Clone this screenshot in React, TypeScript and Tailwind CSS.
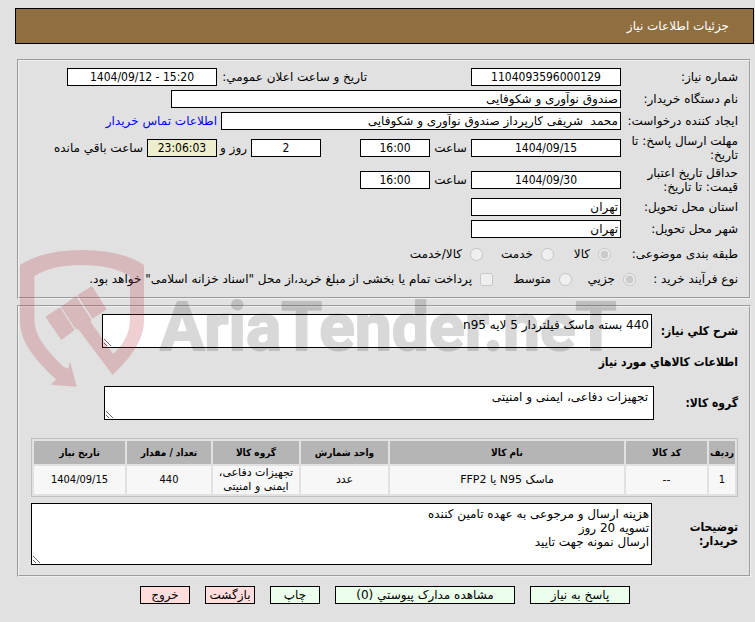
import type { ReactNode } from 'react';

const inputBase = 'h-[18px] border border-black bg-white px-[2px] text-xs leading-4 rounded-none focus:outline-none';
const numeric = "text-center font-['DejaVu_Sans_Condensed','DejaVu_Sans',sans-serif]";
const areaBase = 'block border border-black bg-white pt-[3px] text-xs leading-[14px] rounded-none resize focus:outline-none';
const heading = "font-bold font-['DejaVu_Sans_Condensed','DejaVu_Sans',sans-serif]";
const fieldsetBase = 'mr-1 ml-[17px] border-2 [border-style:groove] border-[#f0f0f0] pr-[11px]';

const columns = [
  { title: 'ردیف', width: 'w-[26px]', value: '1', isNumber: true },
  { title: 'کد کالا', width: 'w-[81px]', value: '--' },
  { title: 'نام کالا', width: '', value: 'ماسک N95 یا FFP2' },
  { title: 'واحد شمارش', width: 'w-[87px]', value: 'عدد' },
  { title: 'گروه کالا', width: 'w-[86px]', value: 'تجهیزات دفاعی، ایمنی و امنیتی' },
  { title: 'تعداد / مقدار', width: 'w-[84px]', value: '440', isNumber: true },
  { title: 'تاریخ نیاز', width: 'w-[91px]', value: '1404/09/15', isNumber: true },
];

const actions = [
  { label: 'پاسخ به نیاز', style: 'w-[100px] bg-[#ecffec]' },
  { label: 'مشاهده مدارک پیوستي (0)', style: 'w-[180px] bg-[#ecffec]' },
  { label: 'چاپ', style: 'w-[50px] bg-[#ecffec]' },
  { label: 'بازگشت', style: 'w-[50px] bg-[#ffdddd]' },
  { label: 'خروج', style: 'w-[50px] bg-[#ffdddd]' },
];

function Row({ id, label, className = 'h-[18px]', labelWidth = 'w-[117px]', children }: {
  id?: string; label: string; className?: string; labelWidth?: string; children: ReactNode;
}) {
  return (
    <div className={`flex items-center ${className}`}>
      <label htmlFor={id} className={`${labelWidth} shrink-0 leading-[14px]`}>{label}</label>
      {children}
    </div>
  );
}

function Option({ type = 'radio', name, label, checked = false, className = '' }: {
  type?: string; name: string; label: string; checked?: boolean; className?: string;
}) {
  return (
    <label className={`flex shrink-0 items-center gap-2 whitespace-nowrap ${className}`}>
      <input type={type} name={name} defaultChecked={checked} disabled className="size-[13px] shrink-0" />
      {label}
    </label>
  );
}

function Watermark() {
  return (
    <svg className="pointer-events-none absolute top-[246px] left-5" width="610" height="144" viewBox="20 246 610 144" direction="ltr" aria-hidden="true">
      <g transform="translate(0 240) scale(0.3333)" fill="#b6333c" fillOpacity="0.23">
        <path
          fillRule="evenodd"
          d="M60 75Q130 30 245 30Q365 30 432 75V240C432 300 395 350 338 405L235 268L226 266L183 200L228 168L275 240L272 246L340 342C370 312 390 285 390 235V108Q335 75 245 75Q155 75 103 108V235C103 290 140 330 190 380L205 386L210 364L230 440L152 434L168 418C95 350 60 300 60 240Z"
        />
        <path d="M136 230L180 202L224 270L184 300Z" />
        <path d="M232 166L276 138L320 208L278 236Z" />
      </g>
      <g opacity="0.15">
        <text x="160" y="350" fontSize="66" fontWeight="700" fontFamily="Roboto, Liberation Sans, sans-serif" stroke="black" strokeWidth="2" strokeLinejoin="round">
          AriaTender.neT
        </text>
      </g>
    </svg>
  );
}

export default function App() {
  return (
    <div dir="rtl" className="relative min-h-screen bg-[#e1e1e1] pt-2 pb-4 text-xs text-black font-['DejaVu_Sans',sans-serif]">
      <header className="mr-px ml-[15px] flex h-9 items-center border border-black bg-[#8f6e40] px-6">
        <h1 className="text-white">جزئیات اطلاعات نیاز</h1>
      </header>

      <fieldset className={`${fieldsetBase} mt-[15px] flex flex-col gap-1 pt-[7px] pb-[9px]`}>
        <Row id="number" label="شماره نیاز:">
          <input id="number" readOnly value="1104093596000129" className={`${inputBase} ${numeric} w-[150px]`} />
          <label htmlFor="announced" className="w-[254px] shrink-0 pr-[104px] whitespace-nowrap">تاریخ و ساعت اعلان عمومي:</label>
          <input id="announced" dir="ltr" readOnly value="1404/09/12 - 15:20" className={`${inputBase} ${numeric} w-[150px]`} />
        </Row>
        <Row id="buyer" label="نام دستگاه خریدار:">
          <input id="buyer" readOnly value="صندوق نوآوری و شکوفایی" className={`${inputBase} w-[450px]`} />
        </Row>
        <Row id="creator" label="ایجاد کننده درخواست:">
          <input id="creator" readOnly value="محمد  شریفی کارپرداز صندوق نوآوری و شکوفایی" className={`${inputBase} w-[400px]`} />
          <a href="#contact" className="mr-1 whitespace-nowrap text-[#0000ff]">اطلاعات تماس خریدار</a>
        </Row>
        <Row id="deadline" label="مهلت ارسال پاسخ: تا تاریخ:" className="h-7">
          <input id="deadline" readOnly value="1404/09/15" className={`${inputBase} ${numeric} w-[150px]`} />
          <label htmlFor="deadline-time" className="w-[41px] shrink-0 text-center">ساعت</label>
          <input id="deadline-time" readOnly value="16:00" className={`${inputBase} ${numeric} w-[70px]`} />
          <input id="days" readOnly value="2" className={`${inputBase} ${numeric} mr-[39px] w-[70px]`} />
          <label htmlFor="days" className="w-[34px] shrink-0 pr-1 whitespace-nowrap">روز و</label>
          <input id="remaining" readOnly value="23:06:03" className={`${inputBase} ${numeric} w-[70px] bg-[#eeeecc]!`} />
          <label htmlFor="remaining" className="mr-1 whitespace-nowrap">ساعت باقي مانده</label>
        </Row>
        <Row id="validity" label="حداقل تاریخ اعتبار قیمت: تا تاریخ:" className="h-7">
          <input id="validity" readOnly value="1404/09/30" className={`${inputBase} ${numeric} w-[150px]`} />
          <label htmlFor="validity-time" className="w-[41px] shrink-0 text-center">ساعت</label>
          <input id="validity-time" readOnly value="16:00" className={`${inputBase} ${numeric} w-[70px]`} />
        </Row>
        <Row id="province" label="استان محل تحویل:">
          <input id="province" readOnly value="تهران" className={`${inputBase} w-[150px]`} />
        </Row>
        <Row id="city" label="شهر محل تحویل:">
          <input id="city" readOnly value="تهران" className={`${inputBase} w-[150px]`} />
        </Row>
        <Row label="طبقه بندی موضوعی:" className="h-6" labelWidth="w-[127px]">
          <Option name="category" label="کالا" checked className="w-[57px]" />
          <Option name="category" label="خدمت" className="w-[71px]" />
          <Option name="category" label="کالا/خدمت" />
        </Row>
        <Row label="نوع فرآیند خرید :" labelWidth="w-[102px]">
          <Option name="process" label="جزیي" checked className="w-[64px]" />
          <Option name="process" label="متوسط" className="w-[79px]" />
          <Option type="checkbox" name="treasury" label={'پرداخت تمام یا بخشی از مبلغ خرید،از محل "اسناد خزانه اسلامی" خواهد بود.'} />
        </Row>
      </fieldset>

      <fieldset className={`${fieldsetBase} mt-[6px] pt-[7px] pb-[10px] pl-3`}>
        <div className="flex items-center">
          <label htmlFor="summary" className={`${heading} w-[86px] shrink-0 whitespace-nowrap`}>شرح کلي نیاز:</label>
          <textarea id="summary" readOnly className={`${areaBase} h-[34px] w-[550px] px-[2px]`} value="440 بسته ماسک فیلتردار 5 لایه n95" />
        </div>
        <h2 className={`${heading} mt-[6px] leading-4`}>اطلاعات کالاهاي مورد نیاز</h2>
        <div className="mt-4 flex items-center">
          <label htmlFor="group" className={`${heading} w-[84px] shrink-0`}>گروه کالا:</label>
          <textarea id="group" readOnly className={`${areaBase} h-[34px] w-[550px] px-[5px]`} value="تجهیزات دفاعی، ایمنی و امنیتی" />
        </div>

        <table className="mt-[18px] w-full table-fixed border-separate border-spacing-[2px] border border-[#c0c0c0] text-center text-[11px] leading-[14px]">
          <thead>
            <tr>
              {columns.map(c => (
                <th key={c.title} className={`${c.width} ${heading} h-[23px] bg-[#b5b5b5] p-0 text-[10px] whitespace-nowrap`}>{c.title}</th>
              ))}
            </tr>
          </thead>
          <tbody>
            <tr>
              {columns.map(c => (
                <td key={c.title} className={`h-7 bg-[#f7f7f7] p-0 ${c.isNumber ? numeric : ''}`}>{c.value}</td>
              ))}
            </tr>
          </tbody>
        </table>

        <div className="mt-[6px] flex items-center">
          <label htmlFor="notes" className={`${heading} w-[86px] shrink-0 pl-6 leading-[14px]`}>توضیحات خریدار:</label>
          <textarea
            id="notes"
            readOnly
            className={`${areaBase} h-[62px] min-w-0 flex-1 px-[2px]`}
            value={'هزینه ارسال و مرجوعی به عهده تامین کننده\nتسویه 20 روز\nارسال نمونه جهت تایید'}
          />
        </div>
      </fieldset>

      <div className="mt-[9px] flex justify-center gap-[15px] pl-[15px]">
        {actions.map(a => (
          <button key={a.label} type="button" className={`h-[18px] border border-black leading-4 whitespace-nowrap ${a.style}`}>{a.label}</button>
        ))}
      </div>

      <Watermark />
    </div>
  );
}
